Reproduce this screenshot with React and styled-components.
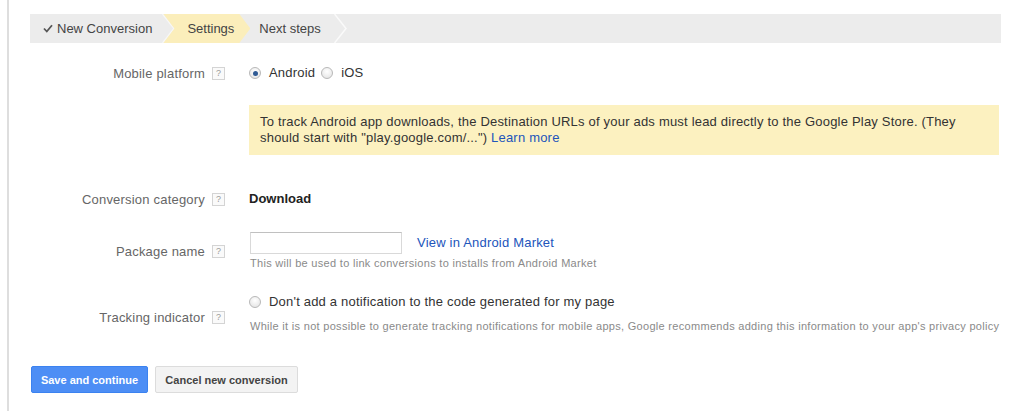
import styled, { createGlobalStyle } from "styled-components"

const GlobalStyle = createGlobalStyle`
  body {
    margin: 0;
    background: #fff;
    font-family: "Liberation Sans", Arial, sans-serif;
    font-size: 13px;
    letter-spacing: 0.2px;
    color: #333;
  }
`

const Page = styled.div`
  margin-left: 7px;
  border-left: 2px solid #dedede;
  min-height: 411px;
  box-sizing: border-box;
  padding: 14px 25px 0 21px;
`

const Crumbs = styled.div`
  display: flex;
  align-items: stretch;
  height: 29px;
  margin-right: -2px;
  background: #ececec;
`

const Step = styled.div`
  display: flex;
  align-items: center;
  gap: 4px;
  color: #444;
  white-space: nowrap;
  letter-spacing: 0;
  padding: ${(p) => p.$pad};
  background: ${(p) => (p.$active ? "#fbeebb" : "transparent")};
  clip-path: ${(p) =>
    p.$active
      ? "polygon(0 0, calc(100% - 11px) 0, 100% 50%, calc(100% - 11px) 100%, 0 100%, 11px 50%)"
      : "none"};
  margin-left: ${(p) => p.$shift || "0"};
`

const Spacer = styled.div`
  flex: none;
  width: ${(p) => p.$w};
`

const Sep = styled.svg`
  flex: none;
  width: 13px;
  height: 29px;
`

const Chevron = ({ color = "#fff" }) => (
  <Sep viewBox="0 0 13 29">
    <polyline points="0.5,0 12,14.5 0.5,29" fill="none" stroke={color} strokeWidth="1.5" />
  </Sep>
)

const Form = styled.div`
  display: grid;
  grid-template-columns: 195px 1fr;
  column-gap: 24px;
  align-items: center;
`

const Label = styled.div`
  grid-column: 1;
  display: flex;
  justify-content: flex-end;
  align-items: center;
  gap: 7px;
  color: #666;
  margin-top: ${(p) => p.$top || "0"};
  padding-top: ${(p) => p.$nudge || "0"};
`

const Help = styled.span`
  display: inline-flex;
  align-items: center;
  justify-content: center;
  width: 11px;
  height: 11px;
  border: 1px solid #d4d4d4;
  font-size: 9px;
  line-height: 1;
  letter-spacing: 0;
  color: #999;
  background: #fafafa;
`

const Value = styled.div`
  grid-column: 2;
  margin-top: ${(p) => p.$top || "0"};
  line-height: 18px;
`

const Options = styled.div`
  display: flex;
  align-items: center;
  height: 18px;
`

const Option = styled.label`
  display: inline-flex;
  align-items: center;
  gap: 8px;
  margin-right: 6px;
  color: #333;
`

const Radio = styled.span`
  width: 10px;
  height: 10px;
  border-radius: 50%;
  border: 1px solid #b8b8b8;
  background: radial-gradient(circle at 50% 35%, #fff 0%, #e0e0e0 100%);
  display: inline-flex;
  align-items: center;
  justify-content: center;

  &::after {
    content: "";
    width: 5px;
    height: 5px;
    border-radius: 50%;
    background: ${(p) => (p.$checked ? "#2f5a94" : "transparent")};
  }
`

const Notice = styled.div`
  grid-column: 2;
  margin-top: 23px;
  background: #fcf1c0;
  padding: 9px 30px 9px 11px;
  line-height: 16px;
  color: #333;
`

const Link = styled.a`
  color: #2255bb;
  text-decoration: none;
`

const Strong = styled.span`
  font-weight: bold;
  color: #222;
  letter-spacing: 0;
`

const InputRow = styled.div`
  display: flex;
  align-items: center;
  gap: 15px;
`

const TextInput = styled.input`
  box-sizing: border-box;
  width: 152px;
  height: 22px;
  margin: 0 0 0 1px;
  border: 1px solid #d9d9d9;
  border-top-color: #c0c0c0;
  outline: none;
`

const Hint = styled.div`
  font-size: 11px;
  line-height: 14px;
  letter-spacing: 0.3px;
  color: #8a8a8a;
  margin-top: ${(p) => p.$gap || "2px"};
  padding-left: 1px;
  white-space: nowrap;
`

const Actions = styled.div`
  display: flex;
  gap: 7px;
  margin-top: 33px;
  padding-left: 1px;
`

const Button = styled.button`
  box-sizing: border-box;
  height: 27px;
  padding: 0;
  white-space: nowrap;
  font-family: "Liberation Sans", Arial, sans-serif;
  font-size: 11px;
  font-weight: bold;
  letter-spacing: 0;
  border-radius: 2px;
  border: 1px solid ${(p) => (p.$primary ? "#3b82f0" : "#dcdcdc")};
  background: ${(p) => (p.$primary ? "#4d8ef5" : "#f3f3f3")};
  color: ${(p) => (p.$primary ? "#fff" : "#444")};
  width: ${(p) => p.$w};
`

const Check = () => (
  <svg width="10" height="9" viewBox="0 0 10 9">
    <polyline points="1,4.5 3.8,7.5 9,1.2" fill="none" stroke="#555" strokeWidth="1.8" />
  </svg>
)

function App() {
  return (
    <Page>
      <GlobalStyle />
      <Crumbs>
        <Step $pad="0 0 0 13px">
          <Check />
          New Conversion
        </Step>
        <Spacer $w="10px" />
        <Chevron color="#f7f7f7" />
        <Step $active $pad="0 16px 0 24px" $shift="-12px">
          Settings
        </Step>
        <Step $pad="0 0 0 9px">Next steps</Step>
        <Spacer $w="13px" />
        <Chevron color="#fafafa" />
      </Crumbs>

      <Form>
        <Label $top="21px">
          Mobile platform <Help>?</Help>
        </Label>
        <Value $top="21px">
          <Options>
            <Option>
              <Radio $checked />
              Android
            </Option>
            <Option>
              <Radio />
              iOS
            </Option>
          </Options>
        </Value>

        <Notice>
          To track Android app downloads, the Destination URLs of your ads must lead directly to the
          Google Play Store. (They should start with "play.google.com/...") <Link href="#">Learn more</Link>
        </Notice>

        <Label $top="35px">
          Conversion category <Help>?</Help>
        </Label>
        <Value $top="35px">
          <Strong>Download</Strong>
        </Value>

        <Label $top="24px">
          Package name <Help>?</Help>
        </Label>
        <Value $top="24px">
          <InputRow>
            <TextInput type="text" />
            <Link href="#">View in Android Market</Link>
          </InputRow>
          <Hint>This will be used to link conversions to installs from Android Market</Hint>
        </Value>

        <Label $top="23px" $nudge="9px">
          Tracking indicator <Help>?</Help>
        </Label>
        <Value $top="23px">
          <Options>
            <Option>
              <Radio />
              Don't add a notification to the code generated for my page
            </Option>
          </Options>
          <Hint $gap="8px">
            While it is not possible to generate tracking notifications for mobile apps, Google recommends adding
            this information to your app's privacy policy
          </Hint>
        </Value>
      </Form>

      <Actions>
        <Button $primary $w="117px">Save and continue</Button>
        <Button $w="143px">Cancel new conversion</Button>
      </Actions>
    </Page>
  )
}

export default App
